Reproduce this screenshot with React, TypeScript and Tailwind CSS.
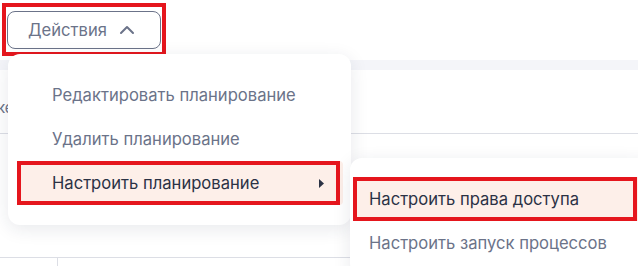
import React from "react";

const slate = "text-[#6b7389]";

const App = () => {
  return (
    <div className="relative w-[638px] h-[266px] overflow-hidden bg-white font-['Inter',sans-serif] text-[16.6px]">
      {/* Page header with actions button */}
      <div className="h-[60px] pt-[3px] pl-[2px]">
        <div className="inline-flex border-4 border-[#e5161d] px-[1px] pt-[4px] pb-[3px]">
          <button
            type="button"
            className={`flex items-center w-[154px] h-[38px] rounded-lg border border-[#6b7389] pl-[20px] ${slate}`}
          >
            Действия
            <svg width="16" height="10" viewBox="0 0 16 10" className="ml-[12px]" fill="none">
              <polyline points="2,8 8,2 14,8" stroke="#6b7389" strokeWidth="2" strokeLinecap="round" strokeLinejoin="round" />
            </svg>
          </button>
        </div>
      </div>

      {/* Background table */}
      <div className="h-[10px] bg-[#f4f5f9]" />
      <div className="h-[64px] flex items-center pt-[14px] border-b border-[#dcdee5]">
        <span className="-ml-[3px] text-[15px] text-[#6b7389]">ке</span>
      </div>
      <div className="h-[124px] border-b border-[#dcdee5]" />
      <div className="flex h-[10px]">
        <div className="w-[58px] border-r border-[#dcdee5]" />
      </div>

      {/* Dropdown menu */}
      <div className="absolute left-[8px] top-[54px] w-[343px] rounded-xl bg-white pt-[19px] pb-[20px] pl-[9px] pr-[8px] shadow-[0_4px_18px_rgba(30,40,70,0.10)]">
        <div className={`h-[44px] flex items-center pl-[35px] ${slate}`}>
          Редактировать планирование
        </div>
        <div className={`h-[44px] flex items-center pl-[35px] ${slate}`}>
          Удалить планирование
        </div>
        <div className="relative h-[44px] flex items-center pl-[35px] pr-[19px] text-[#2b3245] bg-[#fdefe9] rounded-sm">
          <span className="flex-1">Настроить планирование</span>
          <svg width="5" height="9" viewBox="0 0 5 9">
            <polygon points="0,0 5,4.5 0,9" fill="#2b3245" />
          </svg>
          <div className="absolute left-0 top-0 bottom-0 right-[3px] border-4 border-[#e5161d]" />
        </div>
      </div>

      {/* Submenu */}
      <div className="absolute left-[350px] top-[158px] w-[300px] rounded-xl bg-white pt-[19px] pb-[10px] pl-[3px] shadow-[0_4px_18px_rgba(30,40,70,0.10)]">
        <div className="relative h-[44px] flex items-center pl-[16px] text-[#2b3245] bg-[#fdefe9]">
          Настроить права доступа
          <div className="absolute left-0 top-0 bottom-0 w-[284px] border-4 border-[#e5161d]" />
        </div>
        <div className={`h-[44px] flex items-center pl-[16px] ${slate}`}>
          Настроить запуск процессов
        </div>
      </div>
    </div>
  );
};

export default App;
